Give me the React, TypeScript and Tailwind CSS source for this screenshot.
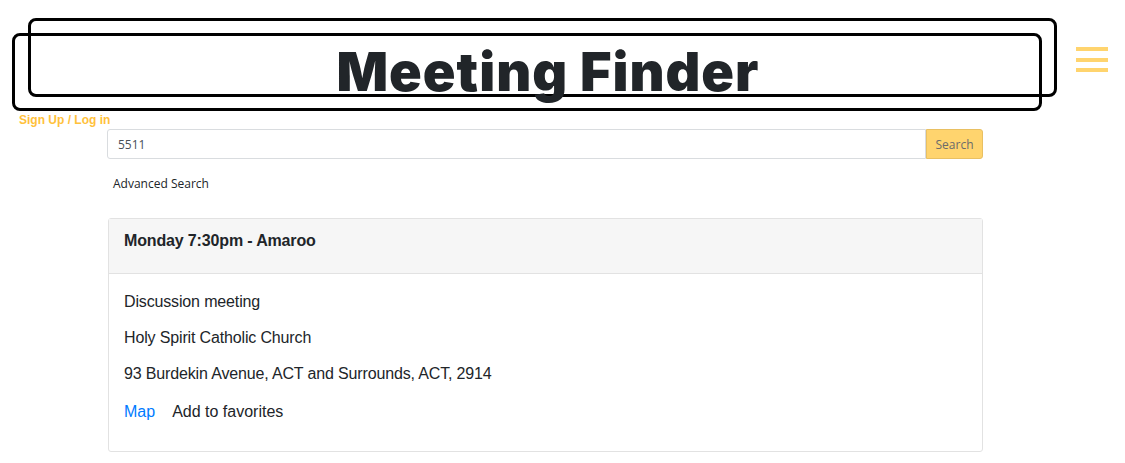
export default function App() {
  const lines = [
    "Discussion meeting",
    "Holy Spirit Catholic Church",
    "93 Burdekin Avenue, ACT and Surrounds, ACT, 2914",
  ];

  return (
    <div className="min-h-[463px] bg-white" style={{ fontFamily: '"Liberation Sans", Arial, sans-serif' }}>
      {/* header with the two sketch boxes behind the title */}
      <div className="relative h-[113px]">
        <div className="pointer-events-none absolute left-[28px] top-[18px] h-[79px] w-[1029px] rounded-[8px] border-[3px] border-black" />
        <div className="pointer-events-none absolute left-[12px] top-[33px] h-[78px] w-[1030px] rounded-[8px] border-[3px] border-black" />
        <div className="flex items-start">
          <h1
            className="relative w-[1076px] pl-[20px] pt-[40px] text-center text-[54px] font-black leading-[64px] tracking-[1px] text-[#212529]"
            style={{ fontFamily: "Inter, sans-serif" }}
          >
            Meeting Finder
          </h1>
          <button className="mt-[47px] flex w-[32px] flex-col gap-[6.7px]">
            <span className="block h-[4px] w-[32px] bg-[#ffd46e]" />
            <span className="block h-[4px] w-[32px] bg-[#ffd46e]" />
            <span className="block h-[4px] w-[32px] bg-[#ffd46e]" />
          </button>
        </div>
      </div>

      <div className="pl-[19px] text-[12px] font-bold leading-[14px] text-[#ffc13b]">Sign Up / Log in</div>

      <div className="ml-[107px] mt-[2px] flex h-[30px] w-[876px]" style={{ fontFamily: '"Open Sans", sans-serif' }}>
        <div className="flex flex-1 items-center rounded-l-[3px] border border-[#d9dcdf] px-[10px] pt-[2px] text-[12px] text-[#495057]">
          5511
        </div>
        <button className="w-[57px] rounded-r-[3px] border border-[#e9c062] bg-[#ffd46e] pt-[2px] text-[12px] text-[#6b6b6b]">
          Search
        </button>
      </div>

      <div
        className="ml-[113px] mt-[16px] text-[12px] leading-[18px] text-[#212529]"
        style={{ fontFamily: '"Open Sans", sans-serif' }}
      >
        Advanced Search
      </div>

      <div className="ml-[108px] mt-[25px] w-[875px] rounded-[3px] border border-[#e2e2e2] text-[16px] tracking-[-0.15px] text-[#212529]">
        <div className="h-[55px] border-b border-[#e2e2e2] bg-[#f6f6f6] px-[15px] pt-[10px]">
          <div className="font-bold leading-[24px]">Monday 7:30pm - Amaroo</div>
        </div>
        <div className="px-[15px] pb-[27px] pt-[16px]">
          {lines.map((l) => (
            <p key={l} className="mb-[12px] leading-[24px]">
              {l}
            </p>
          ))}
          <div className="mt-[14px] flex gap-[17px] leading-[24px] tracking-normal">
            <a className="text-[#007bff]">Map</a>
            <span>Add to favorites</span>
          </div>
        </div>
      </div>
    </div>
  );
}
